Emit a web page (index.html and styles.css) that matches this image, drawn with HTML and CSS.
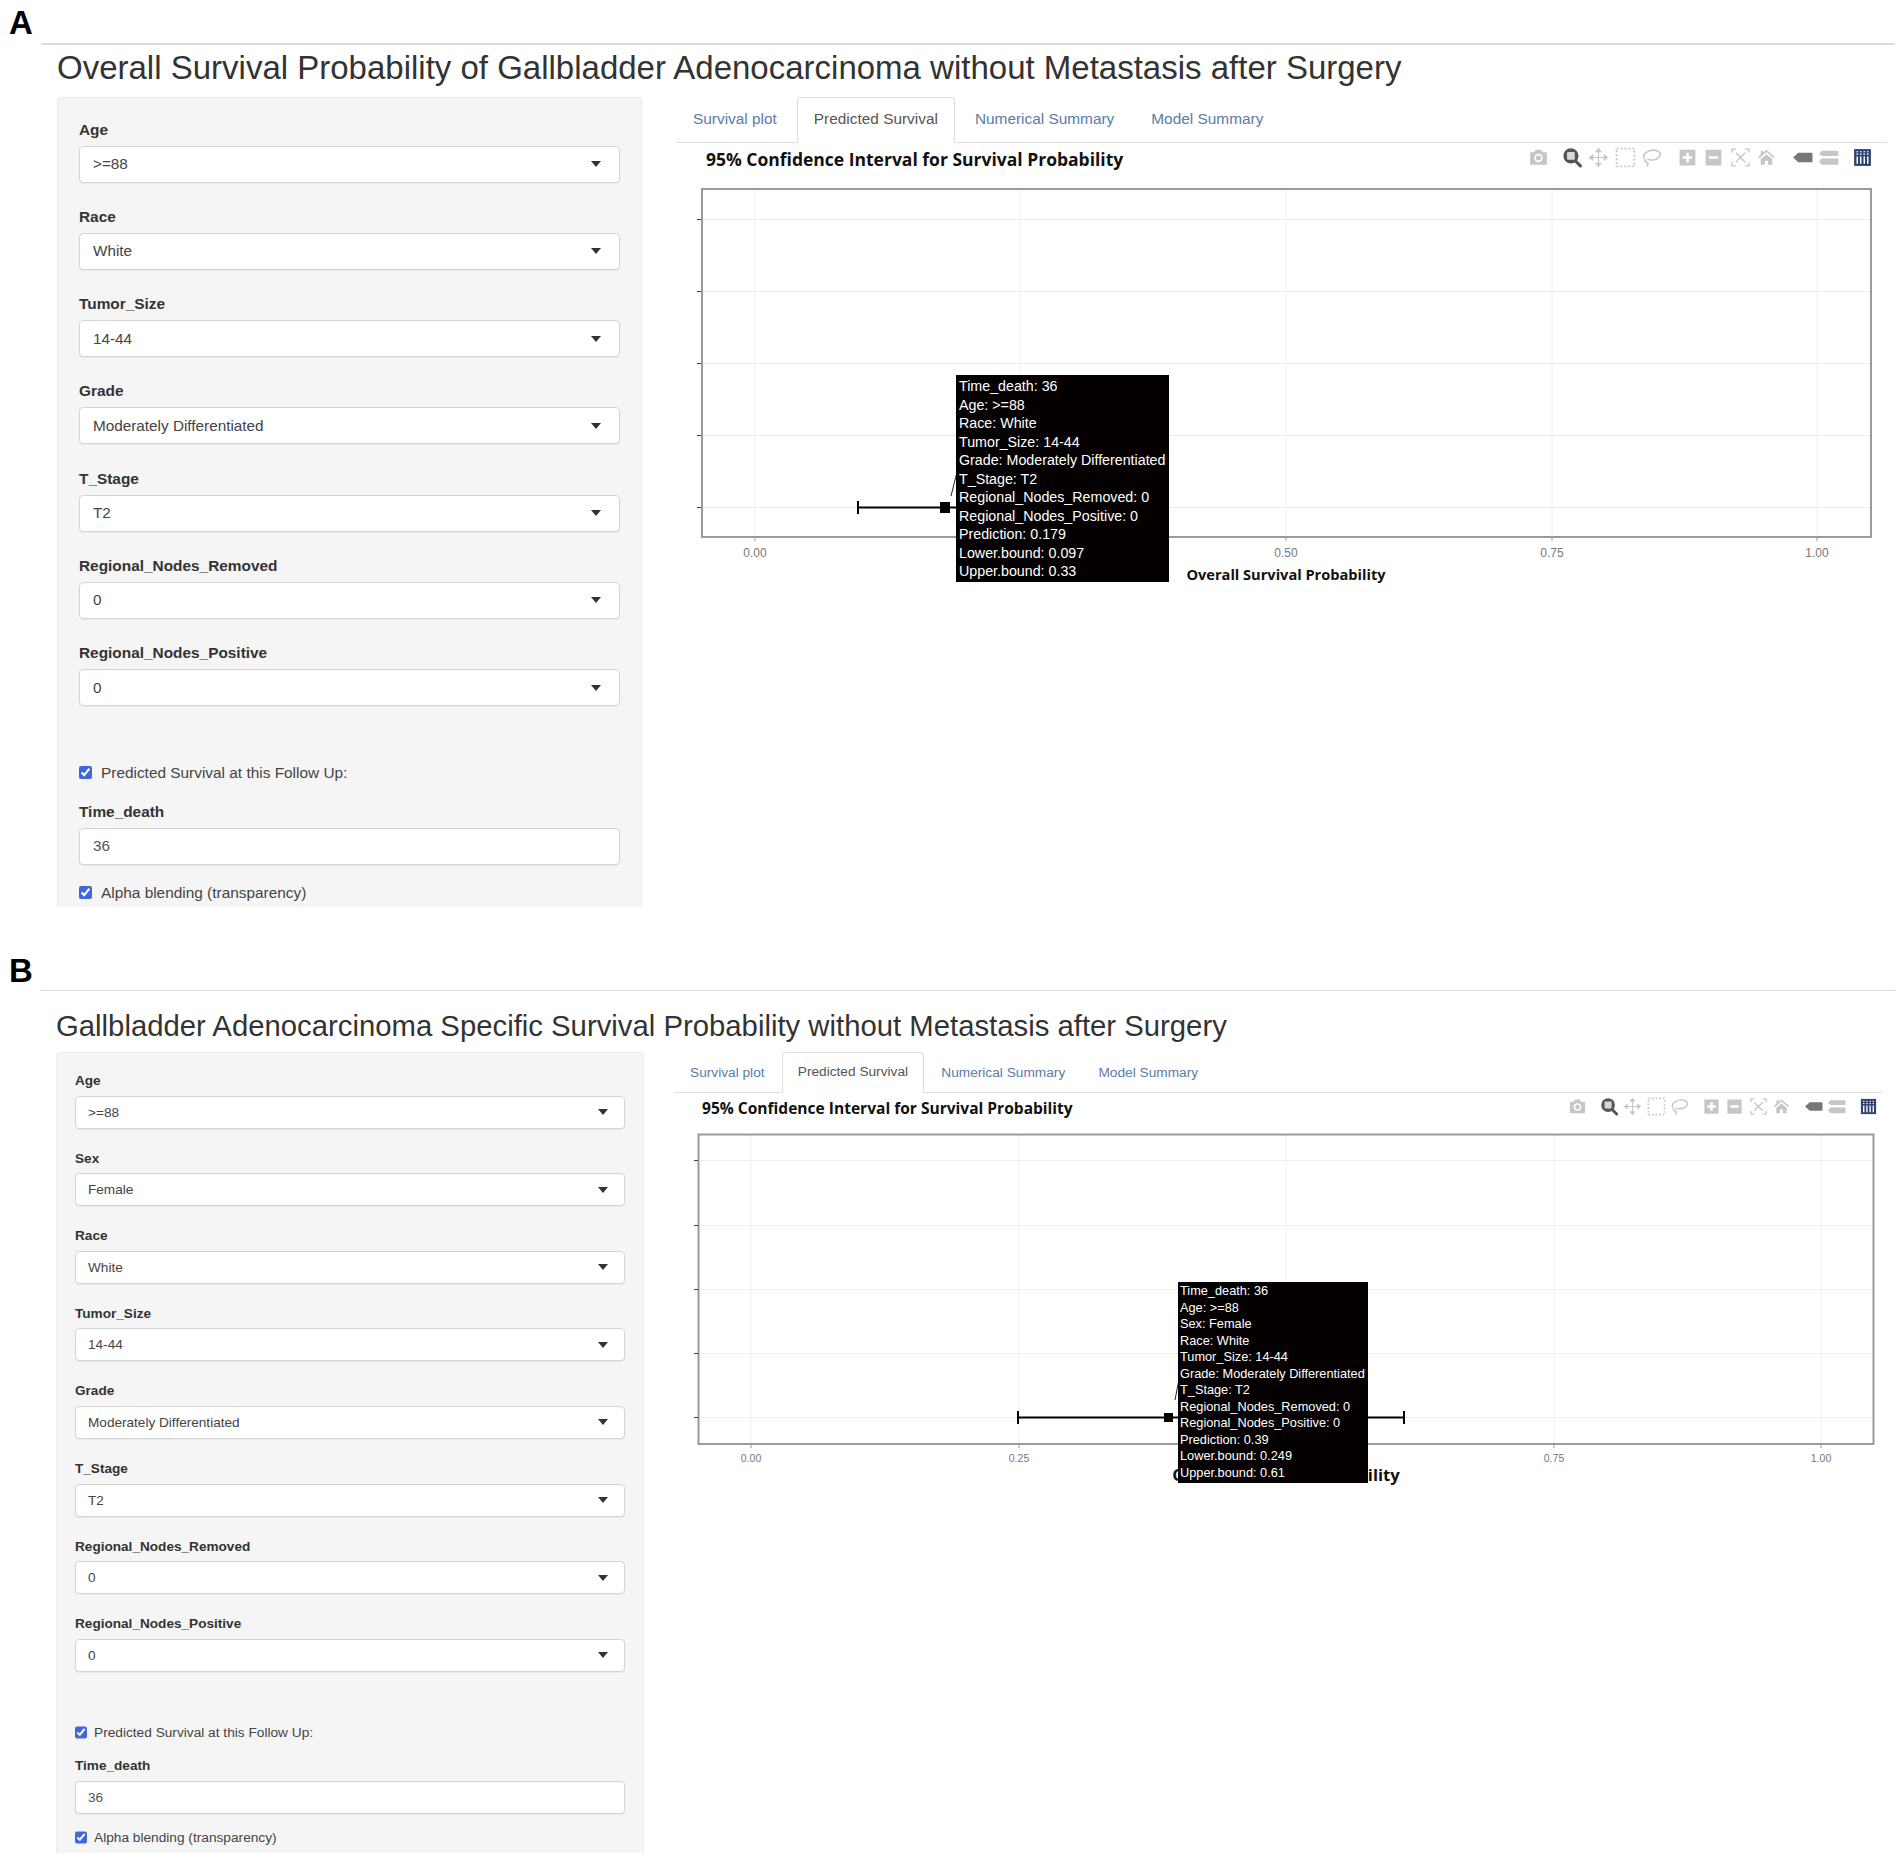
FILE: index.html
```html
<!DOCTYPE html>
<html lang="en">
<head>
<meta charset="utf-8">
<title>Survival Probability Nomograms</title>
<link rel="stylesheet" href="styles.css">
</head>
<body>
<svg class="sprite" aria-hidden="true">
  <symbol id="i-camera" viewBox="0 0 20 20"><path d="M2 6q0-1 1-1h3l1.500-2.500h5l1.500 2.500h3q1 0 1 1v10q0 1-1 1h-14q-1 0-1-1z" fill="currentColor"/><circle cx="10" cy="10.500" r="4" fill="#fff"/><circle cx="10" cy="10.500" r="2.400" fill="currentColor"/></symbol>
  <symbol id="i-zoom" viewBox="0 0 20 20"><path d="M12.500 13l5 5" stroke="currentColor" stroke-width="3" stroke-linecap="round"/><circle cx="8.500" cy="8.500" r="7.200" fill="currentColor"/><rect x="4.800" y="4.800" width="7.400" height="7.400" rx="1" fill="#d8d8d8"/></symbol>
  <symbol id="i-pan" viewBox="0 0 20 20"><path d="M10 1.500v17M1.500 10h17M10 1.500l-2.300 3h4.600zM10 18.500l-2.300-3h4.600zM1.500 10l3-2.300v4.600zM18.500 10l-3-2.300v4.600z" fill="currentColor" stroke="currentColor" stroke-width="1"/></symbol>
  <symbol id="i-select" viewBox="0 0 20 20"><rect x="1.500" y="1.500" width="17" height="17" fill="none" stroke="currentColor" stroke-width="1.800" stroke-dasharray="1.800 2"/></symbol>
  <symbol id="i-lasso" viewBox="0 0 20 20"><path d="M3 11c-2-4 3-8 9-8 4 0 7 2 6 5-1 4-7 5-12 4" fill="none" stroke="currentColor" stroke-width="1.500"/><path d="M4 11.500c-1 2 0 3 1.500 3s1 2 .5 4" fill="none" stroke="currentColor" stroke-width="1.500"/></symbol>
  <symbol id="i-plus" viewBox="0 0 20 20"><path fill-rule="evenodd" d="M2.500 2.500h15v15h-15zM8.700 5.500v3.200h-3.200v2.600h3.200v3.200h2.600v-3.200h3.200v-2.600h-3.200v-3.200z" fill="currentColor"/></symbol>
  <symbol id="i-minus" viewBox="0 0 20 20"><path fill-rule="evenodd" d="M2.500 2.500h15v15h-15zM5.500 8.700v2.600h9v-2.600z" fill="currentColor"/></symbol>
  <symbol id="i-auto" viewBox="0 0 20 20"><path d="M2 5.500v-3.500h3.500M14.500 2h3.500v3.500M18 14.500v3.500h-3.500M5.500 18h-3.500v-3.500M5.500 5.500l9 9M14.500 5.500l-9 9" fill="none" stroke="currentColor" stroke-width="1.300"/></symbol>
  <symbol id="i-home" viewBox="0 0 20 20"><path d="M10 2.500l8 7-1.100 1.200-6.900-6-6.900 6-1.100-1.200 2.600-2.300v-3.700h2.300v1.700zM4.500 11.500l5.500-4.700 5.500 4.700v5.500h-4v-4h-3v4h-4z" fill="currentColor"/></symbol>
  <symbol id="i-tag" viewBox="0 0 20 20"><path d="M1 10l5-4.500h12.500q1 0 1 1v7q0 1-1 1h-12.500z" fill="currentColor"/></symbol>
  <symbol id="i-compare" viewBox="0 0 20 20"><path d="M1 6.500l2.500-3h15q1 0 1 1v3q0 1-1 1h-15zM1 14l2.500-3h15q1 0 1 1v4q0 1-1 1h-15z" fill="currentColor"/></symbol>
  <symbol id="i-logo" viewBox="0 0 20 20"><rect x="2" y="2" width="16" height="16" fill="#2f4373"/><path d="M5 9v7M8.300 9v7M11.700 9v7M15 9v7" stroke="#fff" stroke-width="1.400"/><path d="M4.200 4.500h1.600M7.500 4.500h1.600M10.900 4.500h1.600M14.200 4.500h1.600M4.200 6.800h1.600M7.500 6.800h1.600M10.900 6.800h1.600M14.200 6.800h1.600" stroke="#fff" stroke-width="1"/></symbol>
</svg>

<section class="panel panel-a">
  <div class="panel-letter">A</div>
  <hr class="rule">
  <h1 class="app-title">Overall Survival Probability of Gallbladder Adenocarcinoma without Metastasis after Surgery</h1>
  <div class="app-row">
    <aside class="sidebar">
      <div class="field"><div class="field-label">Age</div><div class="select"><span>&gt;=88</span><i class="caret"></i></div></div>
      <div class="field"><div class="field-label">Race</div><div class="select"><span>White</span><i class="caret"></i></div></div>
      <div class="field"><div class="field-label">Tumor_Size</div><div class="select"><span>14-44</span><i class="caret"></i></div></div>
      <div class="field"><div class="field-label">Grade</div><div class="select"><span>Moderately Differentiated</span><i class="caret"></i></div></div>
      <div class="field"><div class="field-label">T_Stage</div><div class="select"><span>T2</span><i class="caret"></i></div></div>
      <div class="field"><div class="field-label">Regional_Nodes_Removed</div><div class="select"><span>0</span><i class="caret"></i></div></div>
      <div class="field"><div class="field-label">Regional_Nodes_Positive</div><div class="select"><span>0</span><i class="caret"></i></div></div>
      <label class="check check-first"><input type="checkbox" checked>Predicted Survival at this Follow Up:</label>
      <div class="field field-time"><div class="field-label">Time_death</div><div class="select text-input"><span>36</span></div></div>
      <label class="check"><input type="checkbox" checked>Alpha blending (transparency)</label>
    </aside>
    <main class="content">
      <nav class="tabs">
        <a class="tab">Survival plot</a>
        <a class="tab tab-active">Predicted Survival</a>
        <a class="tab">Numerical Summary</a>
        <a class="tab">Model Summary</a>
      </nav>
      <div class="plot-head">
        <div class="plot-title">95% Confidence Interval for Survival Probability</div>
        <div class="modebar">
          <div class="mode-group mode-camera"><svg class="ico"><use href="#i-camera"/></svg></div>
          <div class="mode-group"><svg class="ico ico-on"><use href="#i-zoom"/></svg><svg class="ico"><use href="#i-pan"/></svg><svg class="ico"><use href="#i-select"/></svg><svg class="ico"><use href="#i-lasso"/></svg></div>
          <div class="mode-group"><svg class="ico"><use href="#i-plus"/></svg><svg class="ico"><use href="#i-minus"/></svg><svg class="ico"><use href="#i-auto"/></svg><svg class="ico"><use href="#i-home"/></svg></div>
          <div class="mode-group"><svg class="ico ico-tag"><use href="#i-tag"/></svg><svg class="ico"><use href="#i-compare"/></svg></div>
          <div class="mode-group mode-logo"><svg class="ico"><use href="#i-logo"/></svg></div>
        </div>
      </div>
      <div class="plot">
        <svg class="chart" viewBox="676 175 1226 420" width="1226" height="420">
          <g class="grid">
            <path d="M755 189V536M1020 189V536M1286 189V536M1552 189V536M1817 189V536"/>
            <path d="M702 219.500H1870M702 291.500H1870M702 363.500H1870M702 435.500H1870M702 507.500H1870"/>
          </g>
          <rect class="frame" x="702" y="189" width="1169" height="348"/>
          <path class="tick" d="M697 219.500h4M697 291.500h4M697 363.500h4M697 435.500h4M697 507.500h4"/>
          <path class="tick-x" d="M755 538v3M1020 538v3M1286 538v3M1552 538v3M1817 538v3"/>
          <g class="tick-labels">
            <text x="755" y="557">0.00</text><text x="1020" y="557">0.25</text><text x="1286" y="557">0.50</text><text x="1552" y="557">0.75</text><text x="1817" y="557">1.00</text>
          </g>
          <text class="axis-title" x="1286" y="580">Overall Survival Probability</text>
          <path class="err" d="M858 507.500H1105M858 501v13"/>
          <rect class="marker" x="940" y="502" width="10" height="11"/>
          <path class="stem" d="M951 496L957 472"/>
        </svg>
        <div class="hover-box">
          <div>Time_death: 36</div><div>Age: &gt;=88</div><div>Race: White</div><div>Tumor_Size: 14-44</div><div>Grade: Moderately Differentiated</div><div>T_Stage: T2</div><div>Regional_Nodes_Removed: 0</div><div>Regional_Nodes_Positive: 0</div><div>Prediction: 0.179</div><div>Lower.bound: 0.097</div><div>Upper.bound: 0.33</div>
        </div>
      </div>
    </main>
  </div>
</section>

<section class="panel panel-b">
  <div class="panel-letter">B</div>
  <hr class="rule">
  <h1 class="app-title">Gallbladder Adenocarcinoma Specific Survival Probability without Metastasis after Surgery</h1>
  <div class="app-row">
    <aside class="sidebar">
      <div class="field"><div class="field-label">Age</div><div class="select"><span>&gt;=88</span><i class="caret"></i></div></div>
      <div class="field"><div class="field-label">Sex</div><div class="select"><span>Female</span><i class="caret"></i></div></div>
      <div class="field"><div class="field-label">Race</div><div class="select"><span>White</span><i class="caret"></i></div></div>
      <div class="field"><div class="field-label">Tumor_Size</div><div class="select"><span>14-44</span><i class="caret"></i></div></div>
      <div class="field"><div class="field-label">Grade</div><div class="select"><span>Moderately Differentiated</span><i class="caret"></i></div></div>
      <div class="field"><div class="field-label">T_Stage</div><div class="select"><span>T2</span><i class="caret"></i></div></div>
      <div class="field"><div class="field-label">Regional_Nodes_Removed</div><div class="select"><span>0</span><i class="caret"></i></div></div>
      <div class="field"><div class="field-label">Regional_Nodes_Positive</div><div class="select"><span>0</span><i class="caret"></i></div></div>
      <label class="check check-first"><input type="checkbox" checked>Predicted Survival at this Follow Up:</label>
      <div class="field field-time"><div class="field-label">Time_death</div><div class="select text-input"><span>36</span></div></div>
      <label class="check"><input type="checkbox" checked>Alpha blending (transparency)</label>
    </aside>
    <main class="content">
      <nav class="tabs">
        <a class="tab">Survival plot</a>
        <a class="tab tab-active">Predicted Survival</a>
        <a class="tab">Numerical Summary</a>
        <a class="tab">Model Summary</a>
      </nav>
      <div class="plot-head">
        <div class="plot-title">95% Confidence Interval for Survival Probability</div>
        <div class="modebar">
          <div class="mode-group"><svg class="ico"><use href="#i-camera"/></svg></div>
          <div class="mode-group"><svg class="ico ico-on"><use href="#i-zoom"/></svg><svg class="ico"><use href="#i-pan"/></svg><svg class="ico"><use href="#i-select"/></svg><svg class="ico"><use href="#i-lasso"/></svg></div>
          <div class="mode-group"><svg class="ico"><use href="#i-plus"/></svg><svg class="ico"><use href="#i-minus"/></svg><svg class="ico"><use href="#i-auto"/></svg><svg class="ico"><use href="#i-home"/></svg></div>
          <div class="mode-group"><svg class="ico ico-tag"><use href="#i-tag"/></svg><svg class="ico"><use href="#i-compare"/></svg></div>
          <div class="mode-group"><svg class="ico"><use href="#i-logo"/></svg></div>
        </div>
      </div>
      <div class="plot">
        <svg class="chart" viewBox="674 1126 1228 370" width="1228" height="370">
          <g class="grid">
            <path d="M751 1136V1444M1019 1136V1444M1286 1136V1444M1554 1136V1444M1821 1136V1444"/>
            <path d="M699 1161.500H1873M699 1226.500H1873M699 1290.500H1873M699 1354.500H1873M699 1418.500H1873"/>
          </g>
          <rect class="frame" x="698.500" y="1135.500" width="1175" height="309.500"/>
          <path class="tick" d="M694 1161.500h4M694 1226.500h4M694 1290.500h4M694 1354.500h4M694 1418.500h4"/>
          <path class="tick-x" d="M751 1446v3M1019 1446v3M1286 1446v3M1554 1446v3M1821 1446v3"/>
          <g class="tick-labels">
            <text x="751" y="1463">0.00</text><text x="1019" y="1463">0.25</text><text x="1286" y="1463">0.50</text><text x="1554" y="1463">0.75</text><text x="1821" y="1463">1.00</text>
          </g>
          <text class="axis-title" x="1286" y="1482">Overall Survival Probability</text>
          <path class="err" d="M1018 1418.500H1404M1018 1412v13M1404 1412v13"/>
          <rect class="marker" x="1164" y="1414" width="9" height="9"/>
          <path class="stem" d="M1175 1401L1179 1380"/>
        </svg>
        <div class="hover-box">
          <div>Time_death: 36</div><div>Age: &gt;=88</div><div>Sex: Female</div><div>Race: White</div><div>Tumor_Size: 14-44</div><div>Grade: Moderately Differentiated</div><div>T_Stage: T2</div><div>Regional_Nodes_Removed: 0</div><div>Regional_Nodes_Positive: 0</div><div>Prediction: 0.39</div><div>Lower.bound: 0.249</div><div>Upper.bound: 0.61</div>
        </div>
      </div>
    </main>
  </div>
</section>
</body>
</html>
```

FILE: styles.css
```css
* { box-sizing: border-box; }

html, body { margin: 0; padding: 0; background: #fff; }

body {
  width: 1902px;
  font-family: "Liberation Sans", Arial, sans-serif;
  color: #333;
  overflow-x: hidden;
}

.sprite { width: 0; height: 0; display: block; }

.panel { display: flex; flex-direction: column; }

.panel-letter {
  font-weight: 700;
  font-size: 33px;
  line-height: 30px;
  color: #000;
  padding-left: 9px;
}

.rule { border: 0; margin: 0 7px 0 41px; background: #dcdcdc; }

.app-title { margin: 0; font-weight: 400; color: #333; white-space: nowrap; }

.app-row { display: flex; align-items: flex-start; }

.sidebar {
  flex: none;
  overflow: hidden;
  background: #f5f5f5;
  border: 1px solid #ececec;
  border-bottom: 0;
  border-radius: 4px 4px 0 0;
}

.field-label { font-weight: 700; color: #333; white-space: nowrap; }

.select {
  display: flex;
  align-items: center;
  justify-content: space-between;
  background: #fff;
  border: 1px solid #d4d4d4;
  border-radius: 4px;
  box-shadow: 0 1px 1px rgba(0, 0, 0, 0.05);
  color: #444;
}

.text-input { color: #555; }

.caret {
  width: 0;
  height: 0;
  border-left: 5.500px solid transparent;
  border-right: 5.500px solid transparent;
  border-top: 6px solid #333;
}

.check { display: flex; align-items: center; color: #444; white-space: nowrap; }

.check input { margin: 0; accent-color: #3f68dc; flex: none; }

.content { flex: 1; min-width: 0; }

.tabs { display: flex; align-items: flex-end; border-bottom: 1px solid #ddd; }

.tab { color: #5b7ba9; display: block; white-space: nowrap; }

.tab-active {
  color: #555;
  background: #fff;
  border: 1px solid #ddd;
  border-bottom-color: #fff;
  border-radius: 4px 4px 0 0;
  margin-bottom: -1px;
}

.plot-head { display: flex; align-items: center; justify-content: space-between; }

.plot-title {
  font-family: "Open Sans", sans-serif;
  font-weight: 700;
  color: #111;
  white-space: nowrap;
}

.modebar { display: flex; align-items: center; }

.mode-group { display: flex; align-items: center; }

.ico { display: block; color: #c6c6c6; }

.ico-on { color: #555; }

.ico-tag { color: #777; }

.plot { position: relative; }

.chart { display: block; }

.grid path { fill: none; stroke: #eeeeee; stroke-width: 1; }

.frame { fill: none; stroke: #9a9a9a; stroke-width: 2; }

.tick { fill: none; stroke: #444; stroke-width: 1; }

.tick-x { fill: none; stroke: #999; stroke-width: 1; }

.tick-labels text { fill: #777; text-anchor: middle; font-family: "Liberation Sans", Arial, sans-serif; }

.axis-title {
  fill: #111;
  text-anchor: middle;
  font-family: "Open Sans", sans-serif;
  font-weight: 700;
}

.err { fill: none; stroke: #000; stroke-width: 2; }

.marker { fill: #000; }

.stem { fill: none; stroke: #222; stroke-width: 1; }

.hover-box {
  position: absolute;
  background: #050000;
  color: #fff;
  white-space: nowrap;
  overflow: hidden;
}

/* Panel A */
.panel-a .panel-letter { height: 43px; padding-top: 8px; }
.panel-a .rule { height: 2px; }
.panel-a .app-title { font-size: 33px; line-height: 44px; margin: 1px 0 7px 57px; }
.panel-a .app-row { padding-left: 57px; gap: 34px; }
.panel-a .sidebar { width: 585px; height: 810px; padding: 21.500px 21px 0; }
.panel-a .field { margin-bottom: 24.300px; }
.panel-a .field-label { font-size: 15.400px; line-height: 20px; margin-bottom: 6px; }
.panel-a .select { height: 37px; font-size: 15.300px; padding: 0 18.500px 0 13px; }
.panel-a .check { font-size: 15.400px; line-height: 20px; gap: 9px; }
.panel-a .check input { width: 13px; height: 13px; }
.panel-a .check-first { margin-top: 56.500px; }
.panel-a .field-time { margin: 19px 0 18px; }
.panel-a .tabs { height: 46px; margin-right: 15px; }
.panel-a .tab { font-size: 15.400px; line-height: 20px; padding: 12px 17px 13px; margin-right: 3px; }
.panel-a .tab-active { padding: 11px 16px 13px; }
.panel-a .plot-head { height: 32px; padding: 0 26px 0 30px; }
.panel-a .plot-title { font-size: 17.500px; }
.panel-a .modebar { margin-bottom: 4px; }
.panel-a .mode-group { margin-left: 9px; }
.panel-a .mode-camera { margin-right: -2px; }
.panel-a .mode-logo { margin-left: 7.500px; }
.panel-a .ico { width: 21px; height: 21px; margin: 0 2.750px; }
.panel-a .tick-labels text { font-size: 12px; }
.panel-a .axis-title { font-size: 14.600px; }
.panel-a .hover-box { left: 280px; top: 200px; width: 213px; height: 207px; padding: 2px 0 0 3px; font-size: 14.250px; line-height: 18.550px; }

/* Panel B */
.panel-b .panel-letter { height: 83px; padding-top: 49px; }
.panel-b .rule { height: 1px; }
.panel-b .app-title { font-size: 29.300px; line-height: 40px; margin: 15px 0 6px 56px; }
.panel-b .app-row { padding-left: 56px; gap: 30px; }
.panel-b .sidebar { width: 588px; height: 801px; padding: 19px 18px 0; }
.panel-b .field { margin-bottom: 21px; }
.panel-b .field-label { font-size: 13.600px; line-height: 18px; margin-bottom: 5.600px; }
.panel-b .select { height: 33px; font-size: 13.600px; padding: 0 16px 0 12px; }
.panel-b .check { font-size: 13.700px; line-height: 18px; gap: 7px; }
.panel-b .check input { width: 12px; height: 13px; }
.panel-b .check-first { margin-top: 51.900px; }
.panel-b .field-time { margin: 15.300px 0 15.100px; }
.panel-b .tabs { height: 41px; margin-right: 19px; }
.panel-b .tab { font-size: 13.700px; line-height: 18px; padding: 12px 16px 10px; margin-right: 1.200px; }
.panel-b .tab-active { padding: 10px 15px 11px; }
.panel-b .plot-head { height: 32px; padding: 0 22px 3px 28px; }
.panel-b .plot-title { font-size: 15.550px; }
.panel-b .modebar { margin-bottom: 3px; }
.panel-b .mode-group { margin-left: 8px; }
.panel-b .ico { width: 19px; height: 19px; margin: 0 2.250px; }
.panel-b .tick-labels text { font-size: 10.500px; }
.panel-b .axis-title { font-size: 16.700px; }
.panel-b .hover-box { left: 504px; top: 157px; width: 190px; height: 201px; padding: 1px 0 0 2px; font-size: 12.750px; line-height: 16.550px; }
```
